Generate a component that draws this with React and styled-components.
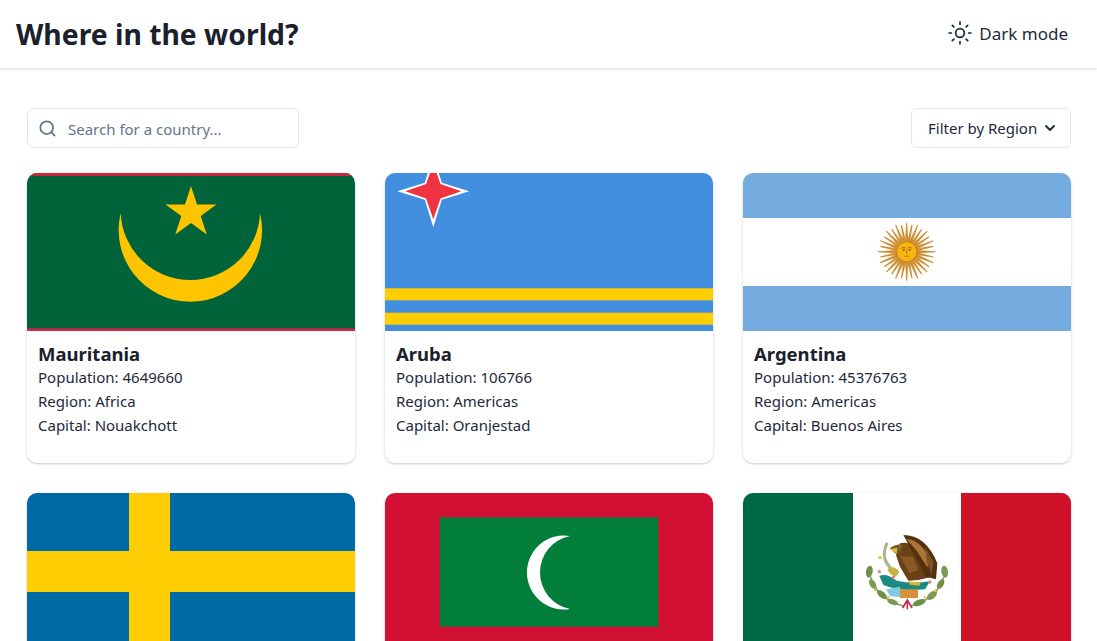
import React from "react";
import styled, { createGlobalStyle } from "styled-components";
import { Search, Sun, ChevronDown } from "lucide-react";

const FONT = `"Noto Sans", "Open Sans", sans-serif`;

const GlobalStyle = createGlobalStyle`
  html, body {
    margin: 0;
    height: 100%;
    overflow: hidden;
    background: #ffffff;
  }
  * {
    box-sizing: border-box;
  }
`;

const starPoints = (cx, cy, outer) => {
  const inner = outer * 0.382;
  const pts = [];
  for (let i = 0; i < 10; i++) {
    const r = i % 2 === 0 ? outer : inner;
    const a = (Math.PI / 5) * i - Math.PI / 2;
    pts.push(`${cx + r * Math.cos(a)},${cy + r * Math.sin(a)}`);
  }
  return pts.join(" ");
};

const fourStar = (cx, cy, tip, waist) =>
  [
    [0, -tip],
    [waist, -waist],
    [tip, 0],
    [waist, waist],
    [0, tip],
    [-waist, waist],
    [-tip, 0],
    [-waist, -waist],
  ]
    .map(([x, y]) => `${cx + x},${cy + y}`)
    .join(" ");

const MauritaniaFlag = () => (
  <FlagSvg viewBox="0 0 328 158" preserveAspectRatio="none">
    <rect width="328" height="158" fill="#00633a" />
    <rect width="328" height="3" fill="#c8273f" />
    <rect y="155.3" width="328" height="2.7" fill="#c8273f" />
    <polygon points={starPoints(164, 39.8, 26.8)} fill="#ffc400" />
    <path d="M93.7 40 A71.7 71.7 0 1 0 233 40 A69.7 69.7 0 0 1 93.7 40 Z" fill="#ffc400" />
  </FlagSvg>
);

const ArubaFlag = () => (
  <FlagSvg viewBox="0 0 328 158" preserveAspectRatio="none">
    <rect width="328" height="158" fill="#418fde" />
    <rect y="115.3" width="328" height="12" fill="#ffcd00" />
    <rect y="139.7" width="328" height="12" fill="#ffcd00" />
    <polygon points={fourStar(48.3, 18.3, 36, 8.5)} fill="#ffffff" />
    <polygon points={fourStar(48.3, 18.3, 28, 7.2)} fill="#ef3340" />
  </FlagSvg>
);

const sunRays = Array.from({ length: 32 }, (_, i) => (i * 360) / 32);

const ArgentinaFlag = () => (
  <FlagSvg viewBox="0 0 328 158" preserveAspectRatio="none">
    <rect width="328" height="158" fill="#74acdf" />
    <rect y="45" width="328" height="68" fill="#ffffff" />
    <g transform="translate(163.7 78.7)">
      {sunRays.map((deg, i) => (
        <polygon
          key={deg}
          points={i % 2 === 0 ? "-1.7,-9 1.7,-9 0.5,-29 -0.5,-29" : "-1.4,-9 1.4,-9 0.6,-27 -0.6,-27"}
          transform={`rotate(${deg})`}
          fill="#cf8f33"
        />
      ))}
      <circle r="10" fill="#f7b50f" stroke="#c07d10" strokeWidth="0.8" />
      <path d="M-5.5 -3.5 Q-3 -5 -1 -3.5 M1 -3.5 Q3 -5 5.5 -3.5" stroke="#a8660f" strokeWidth="0.9" fill="none" />
      <circle cx="-3" cy="-1.8" r="1.1" fill="#a8660f" />
      <circle cx="3" cy="-1.8" r="1.1" fill="#a8660f" />
      <path d="M0 -2 V2 M-2.2 4.5 H2.2" stroke="#a8660f" strokeWidth="0.9" fill="none" />
    </g>
  </FlagSvg>
);

const SwedenFlag = () => (
  <FlagSvg viewBox="0 0 328 158" preserveAspectRatio="none">
    <rect width="328" height="158" fill="#006aa7" />
    <rect x="102" width="41" height="158" fill="#fecc02" />
    <rect y="58" width="328" height="41" fill="#fecc02" />
  </FlagSvg>
);

const MaldivesFlag = () => (
  <FlagSvg viewBox="0 0 328 158" preserveAspectRatio="none">
    <rect width="328" height="158" fill="#d21034" />
    <rect x="54.7" y="24.3" width="218.6" height="109.4" fill="#007e3a" />
    <path d="M185 43 A37 37 0 1 0 185 116 A37.2 37.2 0 0 1 185 43 Z" fill="#ffffff" />
  </FlagSvg>
);

// wreath leaves as x, y, rx, ry, angle, fill
const LEAVES = [
  [58, 155, 10, 18, 10, "#6f8f4a"],
  [68, 192, 9, 16, -30, "#7d9a55"],
  [96, 224, 9, 18, -50, "#6f8f4a"],
  [128, 246, 8, 17, -70, "#7d9a55"],
  [208, 248, 9, 20, 70, "#6f8f4a"],
  [246, 226, 10, 18, 50, "#7d9a55"],
  [272, 192, 9, 16, 30, "#6f8f4a"],
  [284, 155, 10, 18, -10, "#7d9a55"],
];

const SPOTS = [
  [88, 155, 5, "#e8808a"],
  [130, 172, 5, "#e8808a"],
  [240, 186, 5, "#e8808a"],
  [75, 210, 4, "#e6c860"],
  [255, 212, 4, "#e6c860"],
  [225, 232, 4, "#e6c860"],
  [115, 232, 4, "#e6c860"],
  [90, 113, 5, "#dcc24a"],
];

const MexicoFlag = () => (
  <FlagSvg viewBox="0 0 328 158" preserveAspectRatio="none">
    <defs>
      <filter id="soft" x="-10%" y="-10%" width="120%" height="120%">
        <feGaussianBlur stdDeviation="1.4" />
      </filter>
    </defs>
    <rect width="328" height="158" fill="#006847" />
    <rect x="110" width="108" height="158" fill="#ffffff" />
    <rect x="218" width="110" height="158" fill="#ce1126" />
    <g transform="translate(107 27) scale(0.3333)" filter="url(#soft)">
      <path d="M62 170 Q80 235 160 258 M282 170 Q262 235 182 258" stroke="#8fa56c" strokeWidth="5" fill="none" />
      {LEAVES.map(([x, y, rx, ry, angle, fill]) => (
        <ellipse key={`${x}-${y}`} cx={x} cy={y} rx={rx} ry={ry} fill={fill} transform={`rotate(${angle} ${x} ${y})`} />
      ))}
      <path d="M112 68 Q100 90 104 115 Q112 140 130 150" stroke="#a9b58c" strokeWidth="9" fill="none" />
      <path d="M150 70 Q190 60 205 110 L240 172 L205 180 L175 182 L150 140 L138 105 Z" fill="#6a3f16" />
      <path d="M160 45 Q228 45 262 130 L258 178 L228 170 L190 100 Z" fill="#54300f" />
      <path d="M170 58 Q212 58 240 120 L232 142 L200 92 Z" fill="#a9743a" />
      <path d="M150 108 L190 112 L205 150 L178 160 Z" fill="#8a5a28" />
      <path d="M225 80 L250 125 L245 165 L232 130 Z" fill="#7d5226" />
      <path d="M120 84 Q140 68 158 76 L150 100 L135 100 Z" fill="#7a5a28" />
      <path d="M118 88 L142 84 L140 100 Z" fill="#e4b93a" />
      <path d="M112 148 Q130 132 148 155 L138 170 Q120 168 112 148 Z" fill="#c9b23a" />
      <path d="M88 168 Q110 158 140 182 Q190 192 240 184 L225 208 Q150 216 100 195 Z" fill="#1e8a80" />
      <path d="M175 184 L212 188 L208 197 L180 194 Z" fill="#e2b52c" />
      <path d="M108 208 L150 200 L150 232 L120 228 Z" fill="#7fcbe6" />
      <rect x="150" y="208" width="54" height="26" fill="#d9913a" />
      <path d="M158 264 L172 240 L186 264 M172 240 V268" stroke="#c0304a" strokeWidth="5" fill="none" />
      {SPOTS.map(([x, y, r, fill]) => (
        <circle key={`${x}-${y}`} cx={x} cy={y} r={r} fill={fill} />
      ))}
    </g>
  </FlagSvg>
);

// only the first row's details fall inside the window
const COUNTRIES = [
  { id: "mr", name: "Mauritania", population: 4649660, region: "Africa", capital: "Nouakchott", Flag: MauritaniaFlag },
  { id: "aw", name: "Aruba", population: 106766, region: "Americas", capital: "Oranjestad", Flag: ArubaFlag },
  { id: "ar", name: "Argentina", population: 45376763, region: "Americas", capital: "Buenos Aires", Flag: ArgentinaFlag },
  { id: "se", Flag: SwedenFlag },
  { id: "mv", Flag: MaldivesFlag },
  { id: "mx", Flag: MexicoFlag },
];

const App = () => {
  return (
    <Page>
      <GlobalStyle />
      <Header>
        <Title>Where in the world?</Title>
        <ThemeToggle>
          <Sun size={26} strokeWidth={1.6} />
          Dark mode
        </ThemeToggle>
      </Header>
      <Main>
        <Toolbar>
          <SearchBox>
            <Search size={19} strokeWidth={2.2} />
            <SearchInput placeholder="Search for a country..." />
          </SearchBox>
          <FilterButton>
            Filter by Region
            <ChevronDown size={16} strokeWidth={2.8} />
          </FilterButton>
        </Toolbar>
        <Grid>
          {COUNTRIES.map(({ id, name, population, region, capital, Flag }) => (
            <Card key={id}>
              <Flag />
              {name && (
                <CardBody>
                  <CountryName>{name}</CountryName>
                  <Fact>Population: {population}</Fact>
                  <Fact>Region: {region}</Fact>
                  <Fact>Capital: {capital}</Fact>
                </CardBody>
              )}
            </Card>
          ))}
        </Grid>
      </Main>
    </Page>
  );
};

export default App;

const Page = styled.div`
  width: 100%;
  height: 100vh;
  overflow: hidden;
  font-family: ${FONT};
  color: #1e293b;
`;

const Header = styled.header`
  display: flex;
  align-items: center;
  justify-content: space-between;
  height: 68px;
  padding: 0 29px 0 16px;
  background: #ffffff;
  box-shadow: 0 1px 3px rgba(0, 0, 0, 0.16);
`;

const Title = styled.h1`
  margin: 0;
  font-size: 28.3px;
  line-height: 36px;
  font-weight: 700;
  color: #1a202c;
`;

const ThemeToggle = styled.button`
  display: flex;
  align-items: center;
  gap: 6px;
  margin-bottom: 2px;
  padding: 0;
  border: 0;
  background: none;
  font-family: inherit;
  font-size: 17px;
  color: #1e293b;
`;

const Main = styled.main`
  padding: 40px 26px 0 27px;
`;

const Toolbar = styled.div`
  display: flex;
  align-items: center;
  justify-content: space-between;
  margin-bottom: 25px;
`;

const SearchBox = styled.label`
  display: flex;
  align-items: center;
  gap: 11px;
  width: 272px;
  height: 40px;
  padding: 0 10px;
  border: 1px solid #e2e8f0;
  border-radius: 6px;
  color: #64748b;
`;

const SearchInput = styled.input`
  flex: 1;
  min-width: 0;
  border: 0;
  outline: 0;
  padding: 1px 0 0;
  font-family: inherit;
  font-size: 15px;
  color: #1e293b;

  &::placeholder {
    color: #64748b;
    opacity: 1;
  }
`;

const FilterButton = styled.button`
  display: flex;
  align-items: center;
  justify-content: space-between;
  width: 160px;
  height: 40px;
  padding: 0 12px 0 16px;
  border: 1px solid #e2e8f0;
  border-radius: 6px;
  background: #ffffff;
  font-family: inherit;
  font-size: 15px;
  color: #1e293b;
`;

const Grid = styled.div`
  display: grid;
  grid-template-columns: repeat(3, 328px);
  justify-content: space-between;
  gap: 30px;
`;

const Card = styled.article`
  height: 290px;
  border-radius: 10px;
  overflow: hidden;
  background: #ffffff;
  box-shadow: 0 1px 3px rgba(0, 0, 0, 0.14), 0 1px 2px rgba(0, 0, 0, 0.08);
`;

const FlagSvg = styled.svg`
  display: block;
  width: 100%;
  height: 158px;
`;

const CardBody = styled.div`
  padding: 12px 11px 0;
`;

const CountryName = styled.h2`
  margin: 0;
  font-size: 18.5px;
  line-height: 22px;
  font-weight: 700;
  color: #1a202c;
`;

const Fact = styled.p`
  margin: 0;
  font-size: 15px;
  line-height: 24px;
  color: #1e293b;
`;
